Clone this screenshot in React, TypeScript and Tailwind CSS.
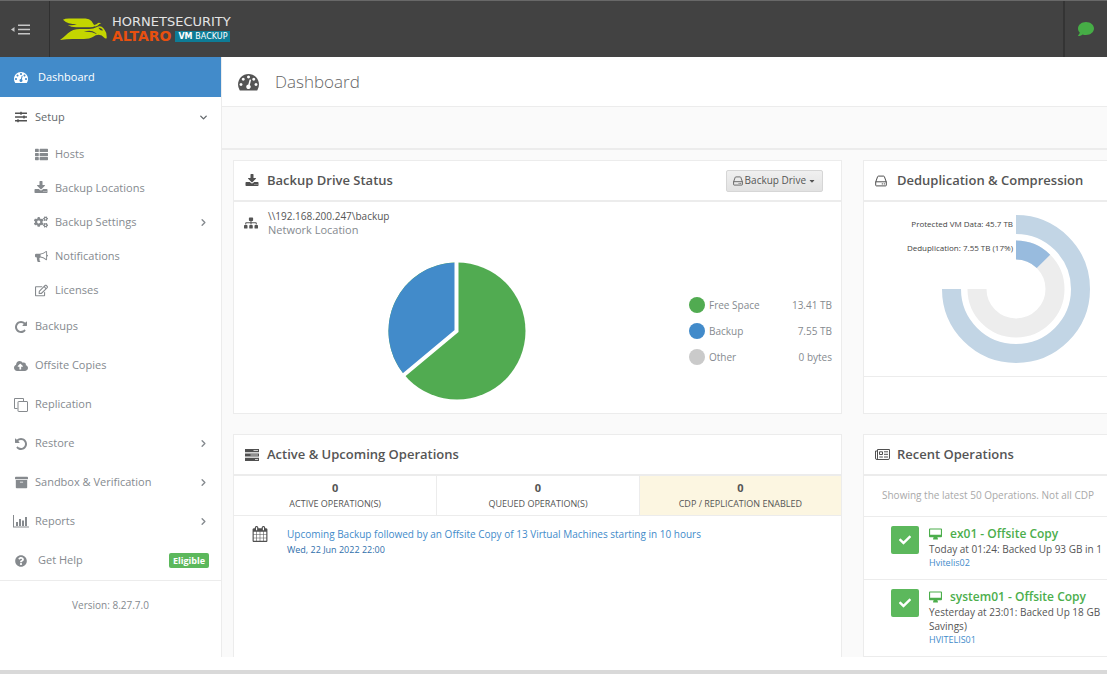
import type { ReactNode } from "react";
import {
  FaArchive,
  FaCaretDown,
  FaCheck,
  FaCloudUploadAlt,
  FaCogs,
  FaComment,
  FaQuestionCircle,
  FaRegEdit,
  FaSitemap,
  FaSlidersH,
  FaThList,
} from "react-icons/fa";
import { ChevronDown, ChevronRight } from "lucide-react";

type IconProps = { className?: string };

function Glyph({ d, className }: IconProps & { d: string }) {
  return (
    <svg viewBox="0 0 1792 1792" className={className} fill="currentColor" aria-hidden="true">
      <path d={d} />
    </svg>
  );
}

const GAUGE =
  "M384 1152q0-53-37.5-90.5t-90.5-37.5-90.5 37.5-37.5 90.5 37.5 90.5 90.5 37.5 90.5-37.5 37.5-90.5zm192-448q0-53-37.5-90.5t-90.5-37.5-90.5 37.5-37.5 90.5 37.5 90.5 90.5 37.5 90.5-37.5 37.5-90.5zm428 481l101-382q6-26-7.5-48.5t-38.5-29.5-48 6.5-30 39.5l-101 382q-60 5-107 43.5t-63 98.5q-20 77 20 146t117 89 146-20 89-117q16-60-6-117t-72-91zm660-33q0-53-37.5-90.5t-90.5-37.5-90.5 37.5-37.5 90.5 37.5 90.5 90.5 37.5 90.5-37.5 37.5-90.5zm-640-640q0-53-37.5-90.5t-90.5-37.5-90.5 37.5-37.5 90.5 37.5 90.5 90.5 37.5 90.5-37.5 37.5-90.5zm448 192q0-53-37.5-90.5t-90.5-37.5-90.5 37.5-37.5 90.5 37.5 90.5 90.5 37.5 90.5-37.5 37.5-90.5zm320 448q0 261-141 483-19 29-54 29h-1402q-35 0-54-29-141-221-141-483 0-182 71-348t191-286 286-191 348-71 348 71 286 191 191 286 71 348z";
const DOWNLOAD =
  "M1344 1344q0-26-19-45t-45-19-45 19-19 45 19 45 45 19 45-19 19-45zm256 0q0-26-19-45t-45-19-45 19-19 45 19 45 45 19 45-19 19-45zm128-224v320q0 40-28 68t-68 28h-1472q-40 0-68-28t-28-68v-320q0-40 28-68t68-28h465l135 136q58 56 136 56t136-56l136-136h464q40 0 68 28t28 68zm-325-569q17 41-14 70l-448 448q-18 19-45 19t-45-19l-448-448q-31-29-14-70 17-39 59-39h256v-448q0-26 19-45t45-19h256q26 0 45 19t19 45v448h256q42 0 59 39z";
const BULLHORN =
  "M1664 640q53 0 90.5 37.5t37.5 90.5-37.5 90.5-90.5 37.5v384q0 52-38 90t-90 38q-417-347-812-380-58 19-91 66t-31 100.5 40 92.5q-20 33-23 65.5t6 58 33.5 55 48 50 61.5 50.5q-29 58-111.5 83t-168.5 11.5-132-55.5q-7-23-29.5-87.5t-32-94.5-23-89-15-101 3.5-98.5 22-110.5h-122q-66 0-113-47t-47-113v-192q0-66 47-113t113-47h480q435 0 896-384 52 0 90 38t38 90v384zm-128 604v-954q-394 302-768 343v270q377 42 768 341z";
const UNDO =
  "M1664 896q0 156-61 298t-164 245-245 164-298 61q-172 0-327-72.5t-264-204.5q-7-10-6.5-22.5t8.5-20.5l137-138q10-9 25-9 16 2 23 12 73 95 179 147t225 52q104 0 198.5-40.5t163.5-109.5 109.5-163.5 40.5-198.5-40.5-198.5-109.5-163.5-163.5-109.5-198.5-40.5q-98 0-188 35.5t-160 101.5l137 138q31 30 14 69-17 40-59 40h-448q-26 0-45-19t-19-45v-448q0-42 40-59 39-17 69 14l130 129q107-101 244.5-156.5t284.5-55.5q156 0 298 61t245 164 164 245 61 298z";
const CALENDAR =
  "M192 1664h288v-288h-288v288zm352 0h320v-288h-320v288zm-352-352h288v-320h-288v320zm352 0h320v-320h-320v320zm-352-384h288v-288h-288v288zm736 736h320v-288h-320v288zm-384-736h320v-288h-320v288zm768 736h288v-288h-288v288zm-384-352h320v-320h-320v320zm-352-864v-288q0-13-9.5-22.5t-22.5-9.5h-64q-13 0-22.5 9.5t-9.5 22.5v288q0 13 9.5 22.5t22.5 9.5h64q13 0 22.5-9.5t9.5-22.5zm736 864h288v-320h-288v320zm-384-384h320v-288h-320v288zm384 0h288v-288h-288v288zm32-480v-288q0-13-9.5-22.5t-22.5-9.5h-64q-13 0-22.5 9.5t-9.5 22.5v288q0 13 9.5 22.5t22.5 9.5h64q13 0 22.5-9.5t9.5-22.5zm384-64v1280q0 52-38 90t-90 38h-1408q-52 0-90-38t-38-90v-1280q0-52 38-90t90-38h128v-96q0-66 47-113t113-47h64q66 0 113 47t47 113v96h384v-96q0-66 47-113t113-47h64q66 0 113 47t47 113v96h128q52 0 90 38t38 90z";

const GaugeIcon = ({ className }: IconProps) => <Glyph d={GAUGE} className={className} />;
const DownloadIcon = ({ className }: IconProps) => <Glyph d={DOWNLOAD} className={className} />;
const BullhornIcon = ({ className }: IconProps) => <Glyph d={BULLHORN} className={className} />;
const UndoIcon = ({ className }: IconProps) => <Glyph d={UNDO} className={className} />;
const CalendarIcon = ({ className }: IconProps) => <Glyph d={CALENDAR} className={className} />;

function RepeatIcon({ className }: IconProps) {
  return (
    <svg viewBox="0 0 1792 1792" className={className} fill="currentColor" aria-hidden="true">
      <path transform="matrix(-1 0 0 1 1792 0)" d={UNDO} />
    </svg>
  );
}

function CopiesIcon({ className }: IconProps) {
  return (
    <svg viewBox="0 0 14 14" className={className} fill="none" stroke="currentColor" aria-hidden="true">
      <path d="M3.5 10.5h-3v-10h9v2.5" />
      <rect x="4" y="3.5" width="9.5" height="10" rx=".5" />
    </svg>
  );
}

function ChartIcon({ className }: IconProps) {
  return (
    <svg viewBox="0 0 16 13" className={className} fill="currentColor" aria-hidden="true">
      <path d="M0 0h1v11.5h15v1H0zM3 7h2v4H3zM6 4h2v7H6zM9 5.5h2V11H9zM12 2h2v9h-2z" />
    </svg>
  );
}

function DriveIcon({ className }: IconProps) {
  return (
    <svg viewBox="0 0 12 12" className={className} fill="none" stroke="currentColor" aria-hidden="true">
      <path d="M.7 7 2.6 1.7q.2-.6.8-.6h5.2q.6 0 .8.6L11.3 7v3.2q0 .7-.7.7H1.4q-.7 0-.7-.7z" />
      <path d="M.7 6.8h10.6" />
      <path d="M6.8 8.9h1M8.8 8.9h1" strokeWidth="1.2" />
    </svg>
  );
}

function TasksIcon({ className }: IconProps) {
  return (
    <svg viewBox="0 0 14 12" className={className} aria-hidden="true">
      <path d="M0 0h14v3.2H0zM0 4.4h14v3.2H0zM0 8.8h14V12H0z" fill="currentColor" />
      <path d="M8.5 1.1H13v1H8.5zM5.5 5.5H13v1H5.5zM10 9.9h3v1h-3z" fill="#ccc" />
    </svg>
  );
}

function NewsIcon({ className }: IconProps) {
  return (
    <svg viewBox="0 0 15 11" className={className} fill="none" stroke="currentColor" aria-hidden="true">
      <path d="M2.5 2H.5v7q0 1.5 1.2 1.5H13q1.5 0 1.5-1.3V.5h-12V9q0 1.4-.9 1.4" />
      <path d="M4.5 2.8h3v2.7h-3zM9 2.8h4M9 5.3h4M4.3 8h3.6M9 8h4" />
    </svg>
  );
}

function DesktopIcon({ className }: IconProps) {
  return (
    <svg viewBox="0 0 14 12" className={className} fill="currentColor" aria-hidden="true">
      <path
        fillRule="evenodd"
        d="M1 0h12q1 0 1 1v7.500q0 1-1 1H9l.6 1.600v.9H4.400v-.9L5 9.500H1q-1 0-1-1V1q0-1 1-1zm.2 1.200v5.600h11.600V1.200z"
      />
    </svg>
  );
}

function MenuIcon({ className }: IconProps) {
  return (
    <svg viewBox="0 0 19 11" className={className} fill="#c6c6c6" aria-hidden="true">
      <path d="M3.500 3v5L0 5.500z" />
      <path d="M7 .5h12V2H7zM7 4.800h12v1.500H7zM7 9h12v1.500H7z" />
    </svg>
  );
}

function Hornet({ className }: IconProps) {
  return (
    <svg viewBox="180 52 142 72" className={className} fill="#c4d600" aria-hidden="true">
      <path d="M189 60q6-4 18-4h50q12 0 18 8l10 15q-3 4-14 4h-42q-16 0-26-7 16 2 28-2-28 0-42-14z" />
      <path d="M180 121q12-8 24-20 14-13 36-13h28q14 0 22-5 8-6 16-2 6 4 9 10 7 8 6 25-4 2-8-2-6-9-16-9-9 0-18 7-9 6-27 6h-34q-18 0-38 3z" />
      <path d="M296 84q10-1 14 8-8 3-14-8z" fill="#424242" />
      <path d="M252 97q20-9 36 3l4 4q-18-9-40-7z" fill="#424242" />
      <path d="M283 76q8-1 12-6 4-2 9 2-6 0-8 4-5 6-13 4z" />
    </svg>
  );
}

type NavItem = {
  label: string;
  icon: (props: IconProps) => ReactNode;
  size?: string;
  arrow?: boolean;
  badge?: string;
};

const setupItems: NavItem[] = [
  { label: "Hosts", icon: FaThList, size: "size-[13px]" },
  { label: "Backup Locations", icon: DownloadIcon, size: "size-[14px]" },
  { label: "Backup Settings", icon: FaCogs, size: "size-[14px]", arrow: true },
  { label: "Notifications", icon: BullhornIcon, size: "size-[13px]" },
  { label: "Licenses", icon: FaRegEdit, size: "size-[13px]" },
];

const navItems: NavItem[] = [
  { label: "Backups", icon: RepeatIcon, size: "size-[14px]" },
  { label: "Offsite Copies", icon: FaCloudUploadAlt, size: "size-[14px]" },
  { label: "Replication", icon: CopiesIcon, size: "size-[14px]" },
  { label: "Restore", icon: UndoIcon, size: "size-[14px]", arrow: true },
  { label: "Sandbox & Verification", icon: FaArchive, size: "size-[13px]", arrow: true },
  { label: "Reports", icon: ChartIcon, size: "h-[13px] w-4", arrow: true },
  { label: "Get Help", icon: FaQuestionCircle, size: "size-3", badge: "Eligible" },
];

function NavLink({ item, nested = false }: { item: NavItem; nested?: boolean }) {
  const Icon = item.icon;
  return (
    <a href="#" className={`flex items-center pr-3 ${nested ? "h-[34px] pl-8" : "h-[39px] pl-3"}`}>
      <span className="mr-[5px] flex w-[18px] shrink-0 justify-center text-[#868a8e]">
        <Icon className={item.size} />
      </span>
      <span className={`grow ${item.badge ? "pl-[3px]" : ""}`}>{item.label}</span>
      {item.arrow && <ChevronRight className="size-[11px]" strokeWidth={3} />}
      {item.badge && (
        <span className="rounded-[2px] bg-[#5cb85c] px-1 text-[9px] leading-[15px] font-bold text-white">
          {item.badge}
        </span>
      )}
    </a>
  );
}

function Sidebar() {
  return (
    <nav className="w-[222px] shrink-0 border-r border-[#ececec] bg-white text-[#858a8f]">
      <a href="#" className="flex h-10 items-center bg-[#428bca] pl-[14px] text-white">
        <GaugeIcon className="mr-[10px] size-[14px]" />
        Dashboard
      </a>
      <a href="#" className="flex h-10 items-center pr-3 pl-3 text-[#63686c]">
        <span className="mr-[5px] flex w-[18px] justify-center text-[#505050]">
          <FaSlidersH className="size-3" />
        </span>
        <span className="grow">Setup</span>
        <ChevronDown className="size-[11px]" strokeWidth={3} />
      </a>
      {setupItems.map((item) => (
        <NavLink key={item.label} item={item} nested />
      ))}
      {navItems.map((item) => (
        <NavLink key={item.label} item={item} />
      ))}
      <p className="border-t border-[#ececec] pt-4 text-center text-[10px] leading-4">Version: 8.27.7.0</p>
    </nav>
  );
}

function Panel({
  icon,
  title,
  action,
  className = "",
  children,
}: {
  icon: ReactNode;
  title: string;
  action?: ReactNode;
  className?: string;
  children: ReactNode;
}) {
  return (
    <section className={`min-w-0 overflow-hidden border border-[#ececec] bg-white ${className}`}>
      <header className="flex h-[41px] items-center border-b-2 border-[#ececec] pr-[18px] pl-[11px]">
        <span className="mr-[7px] flex w-[15px] shrink-0 text-[#505050]">{icon}</span>
        <h2 className="grow text-[13px] font-semibold whitespace-nowrap text-[#555]">{title}</h2>
        {action}
      </header>
      {children}
    </section>
  );
}

const usage = [
  { label: "Free Space", value: "13.41 TB", dot: "bg-[#51ab51]" },
  { label: "Backup", value: "7.55 TB", dot: "bg-[#428bca]" },
  { label: "Other", value: "0 bytes", dot: "bg-[#cacaca]" },
];

function DrivePanel() {
  return (
    <Panel
      icon={<DownloadIcon className="size-[14px]" />}
      title="Backup Drive Status"
      action={
        <button className="flex h-[22px] items-center gap-0.5 rounded-[2px] border border-[#d6d6d6] bg-linear-to-b from-[#f0f0f0] to-[#e2e2e2] px-1.5 text-[10px] text-[#555]">
          <DriveIcon className="size-[10px]" />
          Backup Drive
          <FaCaretDown className="size-2" />
        </button>
      }
    >
      <div className="flex items-center gap-[10px] px-[10px] pt-[7px] text-[#555]">
        <FaSitemap className="size-[14px]" />
        <div className="leading-[14px]">
          <p className="text-[10px]">\\192.168.200.247\backup</p>
          <p className="text-[#858a8f]">Network Location</p>
        </div>
      </div>
      <div className="flex pt-[25px] pr-[9px] pb-[13px]">
        <div className="flex grow justify-center pr-[10px]">
          <svg viewBox="0 0 138 138" className="size-[138px]" role="img" aria-label="Drive usage">
            <circle cx="69" cy="69" r="68.500" fill="#51ab51" />
            <path d="M69 69V.5A68.500 68.500 0 0 0 16.300 112.800z" fill="#428bca" />
            <path d="M68.500 0V69L14 114.500" fill="none" stroke="#fff" strokeWidth="4" />
          </svg>
        </div>
        <ul className="w-[143px] pt-[30px] text-[10px] text-[#858a8f]">
          {usage.map((row) => (
            <li key={row.label} className="flex h-[26px] items-center">
              <span className={`mr-1 size-4 rounded-full ${row.dot}`} />
              <span className="grow">{row.label}</span>
              <span>{row.value}</span>
            </li>
          ))}
        </ul>
      </div>
    </Panel>
  );
}

function DedupPanel() {
  return (
    <Panel
      icon={<DriveIcon className="size-3" />}
      title="Deduplication & Compression"
      className="flex flex-col border-r-0"
    >
      <div className="h-[174px] pt-[9px] pl-[30px]">
        <svg viewBox="0 0 198 154" className="h-[154px] w-[198px] text-[8px]" role="img" aria-label="Deduplication">
          <g fill="none" strokeWidth="19">
            <path d="M122 13.500A64.500 64.500 0 1 1 57.500 78" stroke="#c2d5e5" />
            <path d="M122 39A39 39 0 1 1 83 78" stroke="#ededed" />
            <path d="M122 39A39 39 0 0 1 149.500 50.400" stroke="#98bbde" />
          </g>
          <g fill="#444" textAnchor="end">
            <text x="119" y="16">Protected VM Data: 45.7 TB</text>
            <text x="119" y="40">Deduplication: 7.55 TB (17%)</text>
          </g>
        </svg>
      </div>
      <div className="grow border-t border-[#ececec]" />
    </Panel>
  );
}

const counters = [
  { label: "ACTIVE OPERATION(S)", count: 0, tone: "bg-white" },
  { label: "QUEUED OPERATION(S)", count: 0, tone: "border-l border-[#ececec] bg-white" },
  { label: "CDP / REPLICATION ENABLED", count: 0, tone: "border-l border-[#ececec] bg-[#fcf6e1]" },
];

function ActivePanel() {
  return (
    <Panel icon={<TasksIcon className="h-3 w-[14px]" />} title="Active & Upcoming Operations" className="border-b-0">
      <div className="grid grid-cols-3 border-b border-[#ececec] text-center text-[#555]">
        {counters.map((c) => (
          <div key={c.label} className={`pt-1 pb-[3px] ${c.tone}`}>
            <p className="leading-4 font-bold">{c.count}</p>
            <p className="text-[9px] leading-4">{c.label}</p>
          </div>
        ))}
      </div>
      <div className="flex gap-[19px] px-[18px] pt-[10px]">
        <CalendarIcon className="size-4 text-[#505050]" />
        <div className="text-[10px] leading-4 text-[#428bca]">
          <a href="#">Upcoming Backup followed by an Offsite Copy of 13 Virtual Machines starting in 10 hours</a>
          <p className="text-[9px] text-[#2f6fab]">Wed, 22 Jun 2022 22:00</p>
        </div>
      </div>
    </Panel>
  );
}

const recent = [
  { title: "ex01 - Offsite Copy", lines: ["Today at 01:24: Backed Up 93 GB in 1"], host: "Hvitelis02" },
  {
    title: "system01 - Offsite Copy",
    lines: ["Yesterday at 23:01: Backed Up 18 GB", "Savings)"],
    host: "HVITELIS01",
  },
];

function RecentPanel() {
  return (
    <Panel icon={<NewsIcon className="h-[11px] w-[15px]" />} title="Recent Operations" className="border-r-0">
      <p className="h-10 pl-[18px] text-[10px] leading-[38px] whitespace-nowrap text-[#a9a9a9]">
        Showing the latest 50 Operations. Not all CDP
      </p>
      {recent.map((op) => (
        <div key={op.title} className="flex gap-[10px] border-t border-[#ececec] pt-[9px] pb-[10px] pl-[27px]">
          <span className="flex size-7 shrink-0 items-center justify-center rounded-[2px] bg-[#5cb85c] text-white">
            <FaCheck className="size-3" />
          </span>
          <div className="text-[10px] whitespace-nowrap text-[#555]">
            <a href="#" className="flex items-center gap-2 text-xs leading-4 font-semibold text-[#4cae4c]">
              <DesktopIcon className="h-3 w-[13px]" />
              {op.title}
            </a>
            {op.lines.map((line) => (
              <p key={line} className="leading-[14px]">
                {line}
              </p>
            ))}
            <a href="#" className="block text-[9px] leading-[13px] text-[#428bca]">
              {op.host}
            </a>
          </div>
        </div>
      ))}
    </Panel>
  );
}

function TopBar() {
  return (
    <header className="flex h-[57px] border-t border-[#686868] bg-[#424242]">
      <button className="flex w-[50px] items-center border-r border-[#303030] pl-[11px]" aria-label="Toggle menu">
        <MenuIcon className="h-[11px] w-[19px]" />
      </button>
      <div className="flex grow items-center pl-[10px]">
        <Hornet className="mr-[5px] h-6 w-[47px]" />
        <div className="font-['DejaVu_Sans']">
          <p className="text-[13px] leading-[14px] text-[#e4e4e4]">HORNETSECURITY</p>
          <p className="flex items-center gap-1 text-sm leading-[14px] font-bold text-[#e8500f]">
            ALTARO
            <span className="bg-[#0e7c96] px-[3px] text-[8px] leading-[11px] text-white">
              VM <span className="font-normal">BACKUP</span>
            </span>
          </p>
        </div>
      </div>
      <button className="flex w-11 items-center justify-center border-l-2 border-[#343434]" aria-label="Messages">
        <FaComment className="size-4 text-[#46ad46]" />
      </button>
    </header>
  );
}

export default function App() {
  return (
    <div className="bg-white font-['Open_Sans',sans-serif] text-[11px]">
      <TopBar />
      <div className="flex">
        <Sidebar />
        <main className="min-w-0 grow bg-[#fafafa]">
          <div className="flex h-[50px] items-center gap-4 border-b border-[#ececec] bg-white pl-4">
            <GaugeIcon className="size-[21px] text-[#555]" />
            <h1 className="text-[17px] font-light text-[#666]">Dashboard</h1>
          </div>
          <div className="h-[43px] border-b-2 border-[#ececec]" />
          <div className="grid grid-cols-[minmax(0,1fr)_244px] gap-x-[21px] gap-y-5 pt-[10px] pl-[11px]">
            <DrivePanel />
            <DedupPanel />
            <ActivePanel />
            <RecentPanel />
          </div>
        </main>
      </div>
      <footer className="h-[17px] border-b-4 border-[#d9d9d9] bg-white" />
    </div>
  );
}
